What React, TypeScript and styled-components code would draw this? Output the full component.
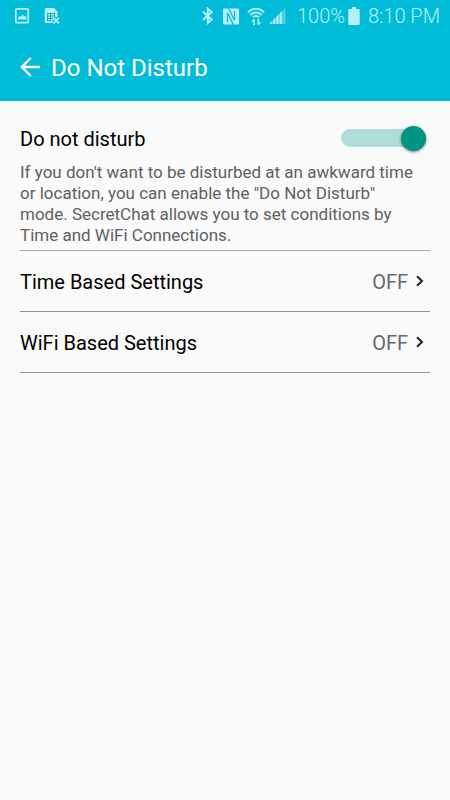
import React, { useState } from "react";
import styled, { createGlobalStyle } from "styled-components";

const GlobalStyle = createGlobalStyle`
  * { box-sizing: border-box; }
  body {
    margin: 0;
    background: #fafafa;
    color: #000;
    font-family: Roboto, "Noto Sans", sans-serif;
  }
`;

const Header = styled.header`
  background: #00bcd8;
`;

const StatusBar = styled.div`
  display: flex;
  align-items: center;
  justify-content: space-between;
  height: 32px;
  padding: 0 10px 0 14px;
  color: #b8eef5;
`;

const StatusGroup = styled.div<{ $gap: number }>`
  display: flex;
  align-items: center;
  gap: ${(p) => p.$gap}px;
  svg { display: block; }
`;

const StatusText = styled.span`
  font-size: 20px;
  line-height: 24px;
  font-weight: 300;
  white-space: nowrap;
`;

const Battery = styled.div`
  display: flex;
  align-items: center;
  gap: 3px;
  margin: 0 4px 0 7px;
`;

const TitleBar = styled.div`
  display: flex;
  align-items: center;
  gap: 10px;
  height: 69px;
  padding: 0 20px;
`;

const BackButton = styled.button`
  display: flex;
  padding: 0;
  border: 0;
  background: none;
  color: #fff;
  cursor: pointer;
`;

const Title = styled.h1`
  margin: 0;
  padding-top: 2px;
  color: #fff;
  font-size: 24px;
  line-height: 28px;
  font-weight: 400;
`;

const Main = styled.main`
  padding: 24px 20px 0;
`;

const Intro = styled.section`
  padding-bottom: 4px;
  border-bottom: 1px solid #a8a8a8;
`;

const SwitchLabel = styled.label`
  display: flex;
  align-items: center;
  justify-content: space-between;
  height: 28px;
  padding-right: 4px;
  font-size: 20px;
  line-height: 28px;
  cursor: pointer;
`;

const Switch = styled.input`
  appearance: none;
  display: flex;
  align-items: center;
  width: 85px;
  height: 18px;
  margin: 0 0 2px;
  border-radius: 9px;
  background: #b0ddd9;
  cursor: pointer;

  &::before {
    content: "";
    width: 25px;
    height: 25px;
    flex: none;
    border-radius: 50%;
    background: #f1f1f1;
    box-shadow: 0 1px 3px rgba(0, 0, 0, 0.5);
  }

  &:checked::before {
    margin-left: auto;
    background: #009485;
  }
`;

const Description = styled.p`
  margin: 9px 0 0;
  padding-right: 8px;
  color: #606060;
  font-size: 17px;
  line-height: 21px;
`;

const SettingRow = styled.button`
  display: flex;
  align-items: center;
  justify-content: space-between;
  width: 100%;
  height: 61px;
  padding: 2px 5px 0 0;
  border: 0;
  border-bottom: 1px solid #929292;
  background: none;
  color: #000;
  font: inherit;
  font-size: 20px;
  line-height: 24px;
  text-align: left;
  cursor: pointer;
`;

const SettingValue = styled.span`
  display: flex;
  align-items: center;
  gap: 7px;
  color: #686868;
  svg {
    margin-bottom: 2px;
    color: #222;
  }
`;

const PictureIcon = () => (
  <svg width="16" height="18" viewBox="0 0 16 18" fill="none">
    <rect x="1.8" y="1.8" width="12.4" height="13.9" rx="1" stroke="currentColor" strokeWidth="1.7" />
    <path d="M4 12.6v-2.4l1.6-1.2 1.2.7L8.8 7.5l1.2 2 1.1-.7 1.2 1.4v2.4z" fill="currentColor" />
  </svg>
);

const SimIcon = () => (
  <svg width="17" height="18" viewBox="0 0 17 18">
    <path d="M2 1h8L13.5 4.5v6H10v5.5H2A1.2 1.2 0 0 1 .8 14.8V2.2A1.2 1.2 0 0 1 2 1z" fill="currentColor" />
    <path d="M3 6.5h8M3.5 6.5v7.5M6.5 6.5v7.5M10.5 6.5v4M3 9h7M3 11.5h6M3 13.8h5.5" stroke="#18a9bf" fill="none" />
    <path d="M9.5 10.5l5.6 6M15.1 10.5l-5.6 6" stroke="#00bcd8" strokeWidth="3.6" />
    <path d="M9.5 10.8l5.4 5.7M14.9 10.8l-5.4 5.7" stroke="currentColor" strokeWidth="1.8" />
  </svg>
);

const BluetoothIcon = () => (
  <svg width="14" height="18" viewBox="0 0 14 18" fill="none" stroke="currentColor" strokeWidth="2">
    <path d="M2 4.8l8.7 7.8-3.9 3.3V1.8l3.9 3.4L2 12.8" />
  </svg>
);

const NfcIcon = () => (
  <svg width="16" height="17" viewBox="0 0 16 17" fill="none">
    <rect x="0" y="0.5" width="16" height="16" rx="1" fill="currentColor" />
    <path d="M4.5 14V4.8l6 11.9M11.5 3v9.2L5.5.3" stroke="#00bcd8" strokeWidth="1.2" />
  </svg>
);

const WifiIcon = () => (
  <svg width="18" height="20" viewBox="0 0 18 20" fill="none" stroke="currentColor">
    <path d="M1 6.5c4.4-5 11.6-5 16 0M3.5 9c3-3.4 8-3.4 11 0M6 11.3c1.7-1.8 4.3-1.8 6 0" strokeWidth="2" />
    <path d="M7.2 19v-5.5M5 15.7l2.2-2.2M11.2 13v5.5M13.4 16.3l-2.2 2.2" strokeWidth="1.6" />
  </svg>
);

const SignalIcon = () => (
  <svg width="17" height="18" viewBox="0 0 17 18" fill="currentColor">
    <path d="M.5 17L16.5 1v16z" opacity=".4" />
    <path d="M1 17v-1l2-2v3zM4.2 17v-4.2l2-2V17zM7.5 17V9.5l2-2V17zM10.7 17V6.3l2-2V17z" />
  </svg>
);

const BatteryIcon = () => (
  <svg width="12" height="18" viewBox="0 0 12 18" fill="currentColor">
    <path d="M4 0h4v2h2.8q.9 0 .9.9V17q0 .9-.9.9H1.2Q.3 17.9.3 17V2.9q0-.9.9-.9H4z" />
  </svg>
);

const BackIcon = () => (
  <svg width="21" height="20" viewBox="0 0 21 20" fill="none" stroke="currentColor" strokeWidth="2.4">
    <path d="M20 10H2M10.8 1L1.8 10l9 9" />
  </svg>
);

const ChevronIcon = () => (
  <svg width="10" height="12" viewBox="0 0 10 12" fill="none" stroke="currentColor" strokeWidth="2">
    <path d="M2 1.2L7 6l-5 4.8" />
  </svg>
);

const settings = [
  { name: "Time Based Settings", value: "OFF" },
  { name: "WiFi Based Settings", value: "OFF" },
];

export default function App() {
  const [enabled, setEnabled] = useState(true);

  return (
    <>
      <GlobalStyle />
      <Header>
        <StatusBar>
          <StatusGroup $gap={14}>
            <PictureIcon />
            <SimIcon />
          </StatusGroup>
          <StatusGroup $gap={4}>
            <StatusGroup $gap={8}>
              <BluetoothIcon />
              <NfcIcon />
              <WifiIcon />
            </StatusGroup>
            <SignalIcon />
            <Battery>
              <StatusText>100%</StatusText>
              <BatteryIcon />
            </Battery>
            <StatusText>8:10 PM</StatusText>
          </StatusGroup>
        </StatusBar>
        <TitleBar>
          <BackButton type="button" aria-label="Back">
            <BackIcon />
          </BackButton>
          <Title>Do Not Disturb</Title>
        </TitleBar>
      </Header>
      <Main>
        <Intro>
          <SwitchLabel>
            Do not disturb
            <Switch
              type="checkbox"
              role="switch"
              checked={enabled}
              onChange={(e) => setEnabled(e.target.checked)}
            />
          </SwitchLabel>
          <Description>
            If you don't want to be disturbed at an awkward time or location, you can enable the "Do Not
            Disturb" mode. SecretChat allows you to set conditions by Time and WiFi Connections.
          </Description>
        </Intro>
        {settings.map((s) => (
          <SettingRow type="button" key={s.name}>
            {s.name}
            <SettingValue>
              {s.value}
              <ChevronIcon />
            </SettingValue>
          </SettingRow>
        ))}
      </Main>
    </>
  );
}
